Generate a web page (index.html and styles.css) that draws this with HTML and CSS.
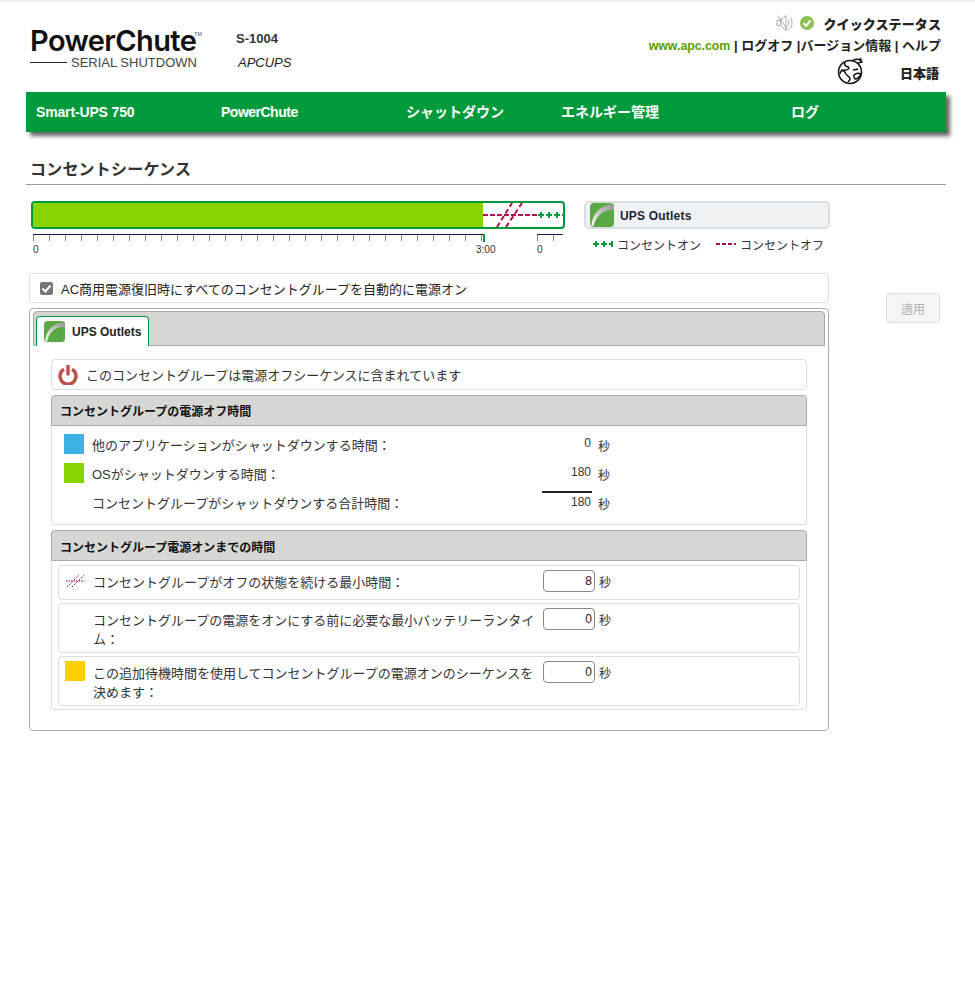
FILE: index.html
```html
<!DOCTYPE html>
<html lang="ja">
<head>
<meta charset="utf-8">
<title>コンセントシーケンス</title>
<link rel="stylesheet" href="styles.css">
</head>
<body>
<header class="top">
  <div class="logo">
    <div class="logo-main">PowerChute<span class="tm">TM</span></div>
    <div class="logo-sub"><span class="logo-rule"></span>SERIAL SHUTDOWN</div>
  </div>
  <div class="host">
    <div class="host-name">S-1004</div>
    <div class="host-ups">APCUPS</div>
  </div>
  <div class="top-right">
    <div class="status">
      <svg class="mute" width="18" height="18" viewBox="0 0 18 18" fill="none" stroke="#aaa" stroke-width="1"><path d="M1 6.500h3.500l5.500-5v15l-5.500-5H1zM4.500 6.500v5M12 6c1 1.700 1 4.300 0 6M14.500 3.500c2 3.500 2 7.500 0 11M1.500 1.500l11 15"/></svg>
      <svg class="ok" width="14" height="14" viewBox="0 0 14 14"><circle cx="7" cy="7" r="7" fill="#8cc152"/><path d="M3.500 7l2.500 3 4.500-5.500" fill="none" stroke="#fff" stroke-width="2"/></svg>
      <b class="status-label">クイックステータス</b>
    </div>
    <div class="links"><span class="apc">www.apc.com</span> | ログオフ |バージョン情報 | ヘルプ</div>
    <div class="lang">
      <svg width="28" height="28" viewBox="0 0 28 28" fill="none" stroke="#111" stroke-width="1.500"><circle cx="13" cy="15" r="11.500"/><path d="M8 5c-1 3 0 4 3 5 2 1 0 3-2 3-3 0-6 1-6 4M4 13c3 0 4 2 5 4s4 2 4 5c0 1-1 2-2 3M16 13c2-1 3 0 5-1M17 18c2-2 5-2 7-1-1 3-4 5-6 5-1-2-2-3-1-4zM15 4c4-3 8-2 10 1M23 1l2 4-4 1"/></svg>
      <b class="lang-label">日本語</b>
    </div>
  </div>
</header>

<nav class="nav">
  <a class="nav-a">Smart-UPS 750</a>
  <a class="nav-b">PowerChute</a>
  <a class="nav-c">シャットダウン</a>
  <a class="nav-d">エネルギー管理</a>
  <a class="nav-e">ログ</a>
</nav>

<h1 class="title">コンセントシーケンス</h1>

<main class="content">
  <div class="main-col">
    <section class="timeline-row">
      <div class="timeline">
        <div class="bar">
          <div class="bar-fill"></div>
          <svg class="bar-graph" width="81" height="24" viewBox="0 0 81 24" fill="none">
            <path d="M0 12h54" stroke="#b0104f" stroke-width="2" stroke-dasharray="5 2"/>
            <path d="M14 24L29 0M23 24L39 0" stroke="#b0104f" stroke-width="2" stroke-dasharray="5 3"/>
            <path d="M55 12h6M58 9v6M63 12h6M66 9v6M71 12h6M74 9v6M79 12h2" stroke="#009a3d" stroke-width="2"/>
          </svg>
        </div>
        <div class="scale">
          <div class="scale-a"></div>
          <div class="scale-mark"></div>
          <div class="scale-b"></div>
        </div>
        <div class="scale-labels">
          <span class="lab-0">0</span><span class="lab-3">3:00</span><span class="lab-e">0</span>
        </div>
      </div>
      <div class="legend">
        <div class="legend-box">
          <svg class="leaf" width="24" height="24" viewBox="0 0 24 24"><use href="#leaf"/></svg>
          <b>UPS Outlets</b>
        </div>
        <div class="legend-keys">
          <svg width="20" height="8" viewBox="0 0 20 8"><path d="M0 4h6M3 1v6M8 4h6M11 1v6M16 4h4M19 1v6" stroke="#009a3d" stroke-width="2"/></svg>
          <span class="key-on">コンセントオン</span>
          <svg width="20" height="8" viewBox="0 0 20 8"><path d="M0 4h20" stroke="#a50d45" stroke-width="2" stroke-dasharray="4 2"/></svg>
          <span>コンセントオフ</span>
        </div>
      </div>
    </section>

    <label class="auto-on"><span class="check"><svg width="13" height="13" viewBox="0 0 13 13"><path d="M2.500 6.500l3 3 5-6" fill="none" stroke="#fff" stroke-width="2"/></svg></span>AC商用電源復旧時にすべてのコンセントグループを自動的に電源オン</label>

    <section class="panel">
      <div class="tabs">
        <div class="tab">
          <svg class="leaf" width="21" height="21" viewBox="0 0 24 24"><use href="#leaf"/></svg>
          <b>UPS Outlets</b>
        </div>
      </div>
      <div class="panel-body">
        <div class="notice">
          <svg width="20" height="20" viewBox="0 0 20 20" fill="none" stroke="#c0504d" stroke-width="3.500"><path d="M6 4.200a8 8 0 1 0 8 0"/><path d="M10 1v8" stroke-linecap="round"/></svg>
          <span>このコンセントグループは電源オフシーケンスに含まれています</span>
        </div>

        <h2 class="group-head">コンセントグループの電源オフ時間</h2>
        <div class="off-list">
          <div class="off-row"><span class="swatch blue"></span><span class="off-label">他のアプリケーションがシャットダウンする時間：</span><span class="off-val">0</span><span class="unit">秒</span></div>
          <div class="off-row"><span class="swatch green"></span><span class="off-label">OSがシャットダウンする時間：</span><span class="off-val">180</span><span class="unit">秒</span></div>
          <div class="off-row"><span class="swatch"></span><span class="off-label">コンセントグループがシャットダウンする合計時間：</span><span class="off-val total">180</span><span class="unit">秒</span></div>
        </div>

        <h2 class="group-head second">コンセントグループ電源オンまでの時間</h2>
        <div class="on-list">
          <div class="on-row one">
            <svg class="swatch-line" width="20" height="20" viewBox="0 0 20 20" fill="none" stroke="#a50d45" stroke-dasharray="1.500 1"><path d="M1 11h18M2 17L14 5M7 17L19 5"/></svg>
            <span class="on-label">コンセントグループがオフの状態を続ける最小時間：</span>
            <span class="field">8</span><span class="unit">秒</span>
          </div>
          <div class="on-row two">
            <span class="swatch"></span>
            <span class="on-label">コンセントグループの電源をオンにする前に必要な最小バッテリーランタイム：</span>
            <span class="field">0</span><span class="unit">秒</span>
          </div>
          <div class="on-row two">
            <span class="swatch yellow"></span>
            <span class="on-label">この追加待機時間を使用してコンセントグループの電源オンのシーケンスを決めます：</span>
            <span class="field">0</span><span class="unit">秒</span>
          </div>
        </div>
      </div>
    </section>
  </div>
  <div class="side-col"><button class="apply" type="button" disabled>適用</button></div>
</main>

<svg class="defs" width="0" height="0">
  <defs>
    <linearGradient id="swoosh" x1="0" y1="1" x2="1" y2="0">
      <stop offset="0" stop-color="#ffffff"/>
      <stop offset="0.45" stop-color="#c8cbc6"/>
      <stop offset="1" stop-color="#8f938d"/>
    </linearGradient>
  </defs>
  <symbol id="leaf" viewBox="0 0 24 24">
    <rect width="24" height="24" rx="4" fill="#5aa845"/>
    <path d="M1.500 23C2 12 9 2 24 1V7C13 6 6 13 3.500 23z" fill="url(#swoosh)"/>
  </symbol>
</svg>
</body>
</html>
```

FILE: styles.css
```css
* { box-sizing: border-box; }
html, body { margin: 0; padding: 0; }
body {
  width: 975px;
  min-height: 1000px;
  background: #fff;
  color: #222;
  font-family: "Liberation Sans", "Noto Sans CJK JP", sans-serif;
  font-size: 13px;
  border-top: 2px solid #eee;
}
.top {
  height: 90px;
  margin: 0 34px 0 30px;
  display: flex;
  position: relative;
}
.logo { width: 206px; padding-top: 24px; }
.logo-main {
  font-family: "Inter", "Liberation Sans", sans-serif;
  font-size: 29px;
  line-height: 30px;
  font-weight: 600;
  letter-spacing: -0.6px;
  color: #111;
  white-space: nowrap;
}
.tm { font-size: 5px; line-height: 0; vertical-align: 15px; margin-left: -2px; font-weight: 400; letter-spacing: 0; color: #555; }
.logo-sub {
  display: flex;
  align-items: center;
  font-size: 13px;
  line-height: 13px;
  color: #444;
  white-space: nowrap;
}
.logo-rule { width: 37px; height: 1px; background: #222; margin-right: 4px; }
.host { padding-top: 29px; }
.host-name { font-size: 13px; font-weight: 700; line-height: 15px; color: #333; }
.host-ups { font-size: 13px; font-style: italic; line-height: 16px; margin: 9px 0 0 2px; color: #222; }
.top-right { margin-left: auto; padding-top: 11px; text-align: right; font-size: 13px; font-weight: 700; color: #222; }
.status { display: flex; justify-content: flex-end; align-items: center; height: 20px; }
.mute { margin-right: 6px; }
.ok { margin-right: 9px; }
.status-label { letter-spacing: 0.1px; }
.links { line-height: 18px; margin-top: 4px; white-space: nowrap; }
.apc { color: #5a9e00; font-size: 12.300px; }
.lang { display: flex; justify-content: flex-end; align-items: center; margin-top: 2px; height: 28px; }
.lang-label { margin: 0 2px 0 35px; padding-top: 2px; }

.nav {
  margin-left: 26px;
  width: 920px;
  height: 40px;
  background: #009a3d;
  box-shadow: 4px 4px 4px #666;
  display: flex;
  align-items: center;
  color: #fff;
  font-size: 14px;
  font-weight: 700;
  white-space: nowrap;
}
.nav-a { margin-left: 10px; width: 185px; letter-spacing: -0.15px; }
.nav-b { width: 185px; letter-spacing: -0.5px; }
.nav-c { width: 155px; padding-bottom: 2px; }
.nav-d { width: 230px; padding-bottom: 2px; }
.nav-e { padding-bottom: 2px; }

.title {
  margin: 27px 29px 0 26px;
  padding: 0 0 4px 4px;
  height: 26px;
  font-size: 16px;
  line-height: 21px;
  font-weight: 700;
  letter-spacing: 0.2px;
  color: #333;
  border-bottom: 1px solid #999;
}
.content { display: flex; margin-left: 29px; }
.main-col { width: 800px; }
.side-col { padding: 108px 0 0 57px; }
.apply {
  width: 54px;
  height: 30px;
  padding: 0;
  background: #f5f5f5;
  border: 1px solid #ddd;
  border-radius: 4px;
  color: #b0b0b0;
  font: 12px "Liberation Sans", "Noto Sans CJK JP", sans-serif;
}

.timeline-row { display: flex; padding: 16px 0 0 2px; height: 88px; }
.timeline { width: 553px; flex: none; }
.bar {
  width: 534px;
  height: 28px;
  border: 2px solid #009a3d;
  border-radius: 4px;
  display: flex;
  overflow: hidden;
}
.bar-fill { flex: none; width: 450px; background: #88d400; }
.bar-graph { flex: none; }
.scale {
  display: flex;
  margin-top: 5px;
  padding-left: 2px;
  height: 7px;
  width: 534px;
}
.scale-a {
  width: 450px;
  border-top: 1px solid #0b1f50;
  background: repeating-linear-gradient(90deg, #888 0 1px, transparent 1px 16px);
}
.scale-mark { width: 2px; height: 8px; background: #009a3d; }
.scale-b {
  width: 26px;
  margin-left: 52px;
  border-top: 1px solid #0b1f50;
  background: repeating-linear-gradient(90deg, #888 0 1px, transparent 1px 16px);
}
.scale-labels { height: 14px; margin-top: 2px; font-size: 10px; line-height: 14px; color: #333; display: flex; }
.lab-0 { margin-left: 2px; width: 443px; }
.lab-3 { width: 61px; }
.legend { margin-left: 0; }
.legend-box {
  width: 246px;
  height: 28px;
  background: #f0f3f6;
  border: 2px solid #ddd;
  border-radius: 5px;
  display: flex;
  align-items: center;
  gap: 6px;
  padding-left: 4px;
  font-size: 12px;
  letter-spacing: 0.2px;
  color: #223;
}
.legend-box b { padding-top: 2px; }
.legend-box .leaf { flex: none; }
.legend-keys {
  display: flex;
  align-items: center;
  margin: 7px 0 0 9px;
  height: 16px;
  font-size: 12px;
  color: #333;
  white-space: nowrap;
}
.legend-keys span { margin-left: 4px; }
.legend-keys .key-on { margin-right: 15px; }

.auto-on {
  display: flex;
  align-items: center;
  width: 800px;
  height: 30px;
  padding-left: 10px;
  border: 1px solid #ddd;
  border-radius: 4px;
  font-size: 13px;
}
.check {
  width: 13px;
  height: 13px;
  background: #767676;
  border-radius: 2px;
  margin-right: 8px;
  display: flex;
}
.panel {
  margin-top: 5px;
  width: 800px;
  height: 423px;
  border: 1px solid #aaa;
  border-radius: 4px;
  padding: 2px 3px 0 3px;
}
.tabs {
  height: 35px;
  background: #d6d6d4;
  border: 1px solid #aaa;
  border-radius: 4px 4px 0 0;
  padding: 4px 0 0 2px;
  margin-bottom: 13px;
}
.tab {
  width: 113px;
  height: 30px;
  background: #fff;
  border: 1px solid #009a3d;
  border-bottom: 0;
  border-radius: 4px 4px 0 0;
  display: flex;
  align-items: center;
  gap: 7px;
  padding-left: 7px;
  font-size: 12px;
  color: #222;
}
.panel-body { margin: 0 18px; }
.notice {
  height: 31px;
  border: 1px solid #ddd;
  border-radius: 4px;
  display: flex;
  align-items: center;
  gap: 8px;
  padding-left: 6px;
  font-size: 13px;
  color: #333;
}
.group-head {
  margin: 5px 0 0;
  height: 31px;
  background: #d6d6d4;
  border: 1px solid #aaa;
  border-radius: 4px 4px 0 0;
  font-size: 12px;
  line-height: 33px;
  font-weight: 700;
  padding-left: 8px;
  color: #111;
}
.off-list {
  height: 99px;
  border: 1px solid #ddd;
  border-top: 0;
  border-radius: 0 0 4px 4px;
  padding: 8px 0 0 12px;
}
.off-row { display: flex; height: 29px; align-items: flex-start; }
.swatch { width: 20px; height: 20px; flex: none; }
.blue { background: #3eb1e6; }
.green { background: #88d400; }
.yellow { background: #ffce00; }
.off-label { width: 450px; margin-left: 8px; padding-top: 3px; line-height: 18px; color: #333; }
.off-val { width: 50px; text-align: right; font-size: 12px; line-height: 16px; color: #333; padding-right: 1px; margin-top: 1px; }
.off-val.total { margin-top: -1px; padding-top: 1px; border-top: 2px solid #222; height: 20px; }
.unit { margin-left: 6px; font-size: 12px; line-height: 18px; padding-top: 4px; color: #333; }
.second { margin-top: 5px; line-height: 34px; }
.on-list {
  height: 149px;
  border: 1px solid #ddd;
  border-top: 0;
  border-radius: 0 0 4px 4px;
  padding: 4px 6px 0;
}
.on-row {
  display: flex;
  align-items: flex-start;
  border: 1px solid #ddd;
  border-radius: 4px;
  padding: 4px 0 0 6px;
  margin-bottom: 3px;
}
.on-row.one { height: 35px; }
.on-row.two { height: 50px; }
.on-label { width: 442px; margin-left: 8px; line-height: 19px; padding-top: 3px; color: #333; }
.on-row .field {
  flex: none;
  width: 52px;
  height: 22px;
  margin-left: 8px;
  border: 1px solid #888;
  border-radius: 4px;
  text-align: right;
  font-size: 12px;
  line-height: 21px;
  padding-right: 2px;
  color: #222;
}
.on-row .unit { margin-left: 4px; padding-top: 4px; }
.defs { position: absolute; }
```
